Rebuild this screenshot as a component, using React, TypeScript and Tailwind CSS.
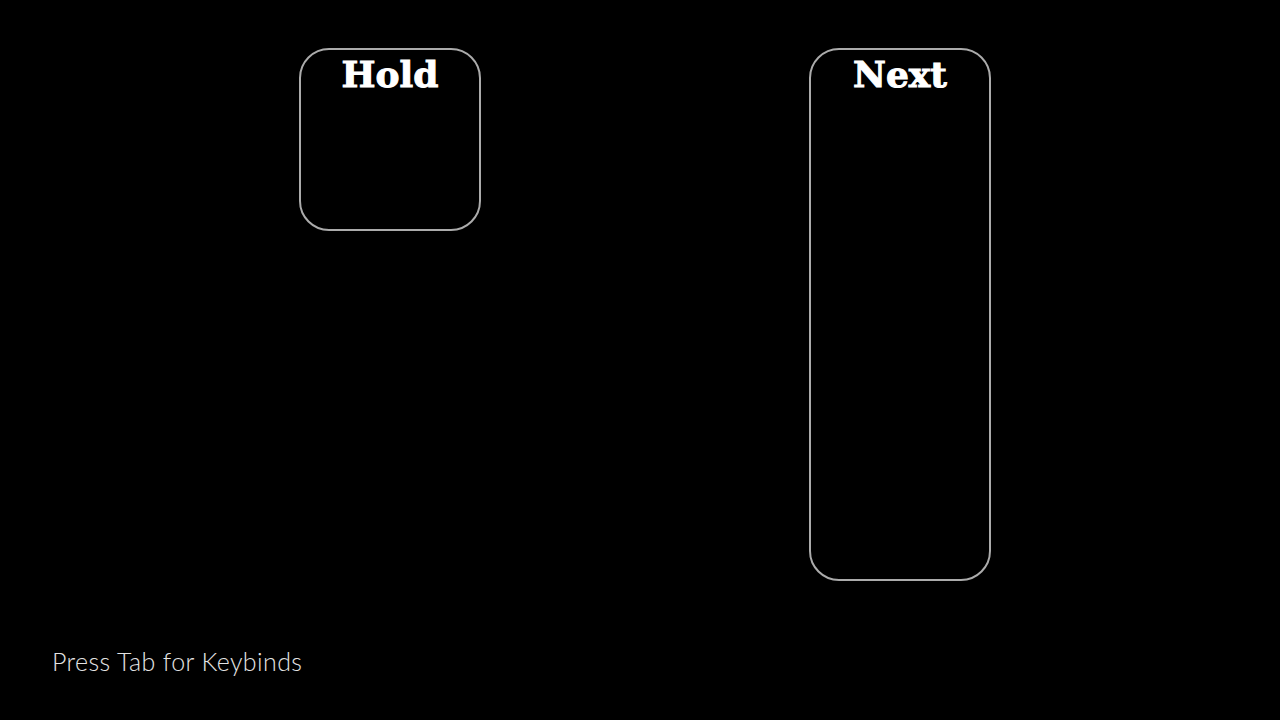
const Panel = ({ title, tall }: { title: string; tall?: boolean }) => {
  return (
    <div
      className={
        "w-[182px] rounded-[30px] border-2 border-[#ababab] bg-black flex flex-col items-center " +
        (tall ? "h-[533px]" : "h-[183px]")
      }
    >
      <h2
        className="mt-0 text-white text-[36px] leading-[48px] font-bold [-webkit-text-stroke:1px_white]"
        style={{ fontFamily: '"DejaVu Serif", serif' }}
      >
        {title}
      </h2>
    </div>
  );
};

export default function App() {
  return (
    <div className="w-[1280px] h-[720px] bg-black flex flex-col overflow-hidden">
      <div className="flex items-start pt-[48px] pl-[299px]">
        <Panel title="Hold" />
        <div className="w-[328px]" />
        <Panel title="Next" tall />
      </div>
      <p
        className="mt-auto mb-[44px] ml-[52px] text-[25px] leading-[30px] font-light tracking-[0.4px] text-[#e4e4e4]"
        style={{ fontFamily: "Lato, sans-serif" }}
      >
        Press Tab for Keybinds
      </p>
    </div>
  );
}
